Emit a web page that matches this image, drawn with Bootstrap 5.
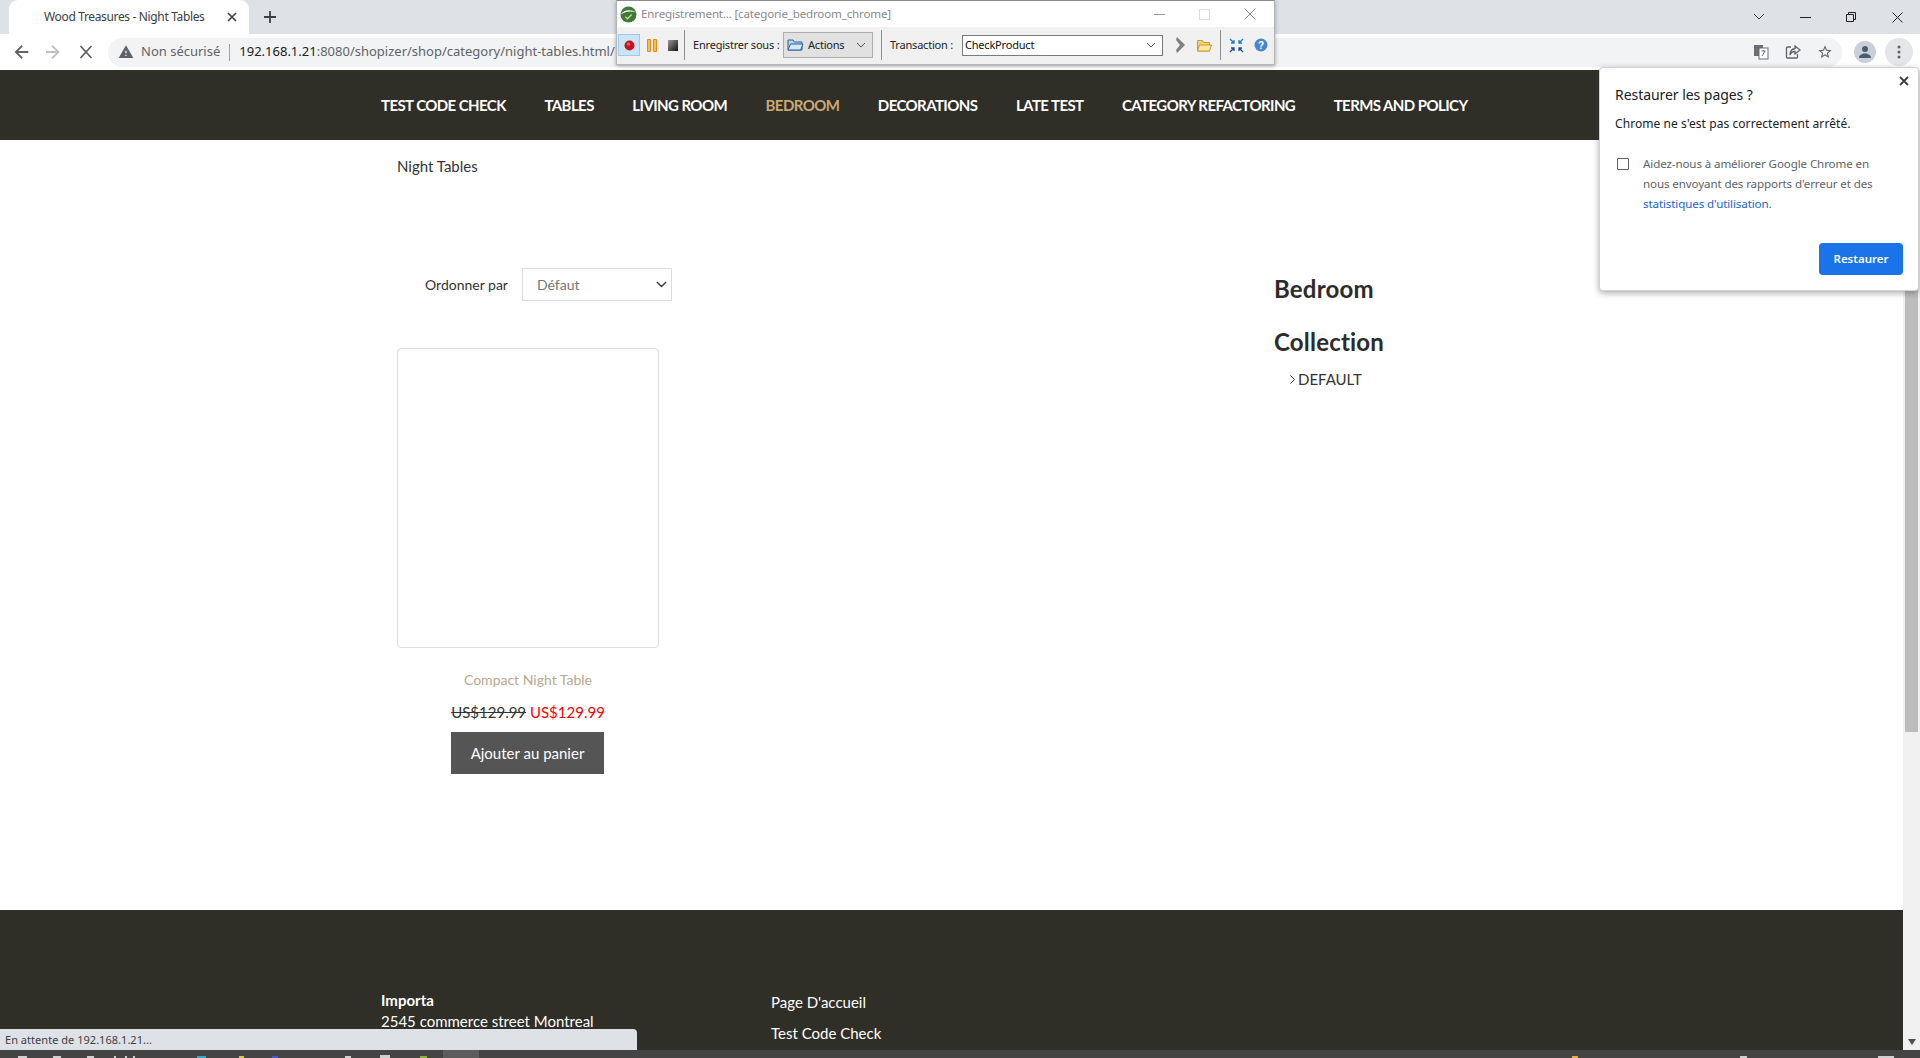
<!DOCTYPE html>
<html lang="fr">
<head>
<meta charset="utf-8">
<title>Wood Treasures - Night Tables</title>
<link href="https://cdn.jsdelivr.net/npm/bootstrap@5.3.0/dist/css/bootstrap.min.css" rel="stylesheet">
<style>
html,body{height:1058px;overflow:hidden}
body{width:1920px;font-family:"Lato","Liberation Sans",sans-serif;font-size:15px;color:#333;background:#fff;position:relative}
.ui-font{font-family:"Noto Sans","Liberation Sans",sans-serif}
.desk{height:1058px}
.tabbar{height:34px;background:#dee1e6;flex:none}
.tab-item{width:240px;height:34px;margin-left:9px;background:#fff;border-radius:9px 9px 0 0;color:#3c4043;font-size:12px;letter-spacing:-.35px}
.tab-fav{width:35px;flex:none}
.tab-title{width:182px;white-space:nowrap}
.tab-plus{margin-left:14px}
.win-ctl{gap:0}
.win-ctl span{width:46px;height:28px}
.toolbar{height:36px;background:#fff;flex:none;padding-left:10px;padding-right:7px}
.nav-ico{width:31px;height:20px;flex:none}
.omnibox{width:1735px;height:29px;margin-left:5px;border-radius:15px;background:#f1f3f4;font-size:13px;color:#5f6368;padding-left:10px;white-space:nowrap}
.omni-warn{margin-right:7px}
.omni-sep{width:1px;height:17px;background:#9aa0a6;margin:0 9px}
.omni-host{color:#202124}
.omni-right{margin-left:auto;gap:16px;padding-right:9px}
.avatar{width:22px;height:22px;border-radius:50%;background:#c9d0da;margin-left:12px}
.menu-dot{width:28px;height:28px;border-radius:50%;background:#e4e6e9;margin-left:9px}
.view{min-height:0;flex:1 1 auto}
.page-col{width:1903px;flex:none}
.site-nav{height:70px;background:#2f2e27;padding:0}
.site-wrap{width:1142px;max-width:1142px;margin-left:381px;margin-right:0;padding:0}
.site-nav .navbar-nav{gap:38.5px}
.site-nav .navbar-nav .nav-link{padding:0;color:#fff;font-weight:700;font-size:15px;letter-spacing:-.58px;white-space:nowrap}
.site-nav .navbar-nav .nav-link.active{color:#c9a876}
.main-area{height:770px;background:#fff}
.crumb-line{padding:16px 0 0 16px;height:36px;line-height:20px;font-size:15px;color:#333}
.sort-row{margin:92px 0 0 44px;height:33px;gap:14px;font-size:14px;color:#333}
.sort-select{width:150px;height:33px;border:1px solid #ddd;border-radius:0;padding:0 14px;font-family:"Lato",sans-serif;font-size:14px;color:#777;background-position:right 4px center;background-size:11px}
.prod-box{width:262px;margin:47px 0 0 16px}
.prod-img{height:300px;border-color:#ddd;border-radius:4px}
.prod-name{margin-top:22px;line-height:20px;font-size:14px;color:#b9a98f}
.prod-price{margin-top:12px;line-height:20px;font-size:15px}
.price-old{color:#333;text-decoration:line-through}
.price-new{color:#f00}
.cart-btn{margin-top:10px;margin-right:1px;width:153px;height:42px;background:#555;color:#fff;border:0;border-radius:0;font-size:15px;padding:0}
.cart-btn:hover{background:#555;color:#fff}
.side-col{flex:0 0 249px;padding-top:134px}
.side-head{font-size:24px;font-weight:700;line-height:30px;letter-spacing:.2px;color:#2b2b2b;margin:0}
.side-head+.side-head{margin-top:23px}
.side-link{margin:12px 0 0 16px;line-height:20px;font-size:15px;color:#333;gap:3px}
.site-foot{height:140px;background:#2f2e27;color:#fff;padding-top:80px;font-size:15px}
.foot-a{width:390px;line-height:21px}
.foot-b div{line-height:20px;margin-bottom:11px}
.foot-b{padding-top:2px}
.sbar{width:17px;flex:none;background:#f1f1f1}
.sbar-thumb{height:662px;width:13px;margin-left:2px;background:#bcbcbc}
.sbar-arrow{margin-top:auto;height:16px}
.taskbar{height:8px;flex:none;background:#444;display:block}
.rec-win{position:absolute;left:616px;top:0;width:659px;height:65px;background:#f0f0f0;border:1px solid #b5b5b5;border-top-color:#8d8d8d;box-shadow:0 1px 4px rgba(0,0,0,.35);font-family:"Noto Sans","Liberation Sans",sans-serif;font-size:11px;letter-spacing:-.2px;color:#222}
.rec-title{height:26px;background:#fff;color:#8a8a8a;padding-left:3px;gap:4px;font-size:11.6px;letter-spacing:-.18px}
.rec-ctl{margin-left:auto;margin-right:2px;gap:0}
.rec-ctl span{width:45px;height:26px;display:flex;align-items:center;justify-content:center}
.rec-tools{height:36px;padding-left:1px}
.rec-on{width:22px;height:22px;background:#cce4f7;border:1px solid #9fc9ea}
.rec-pause{margin-left:7px}
.rec-stop{margin-left:11px}
.rec-sep{width:1px;height:30px;background:#8f8f8f;flex:none}
.sep-a{margin-left:6px}
.rec-label-a{margin-left:8px;width:90px;white-space:nowrap}
.rec-act{width:90px;height:26px;background:#e1e1e1;border:1px solid #adadad;padding:0 6px 0 3px}
.sep-b{margin-left:8px}
.rec-label-b{margin-left:8px;width:72px;white-space:nowrap}
.rec-combo{width:201px;height:21px;background:#fff;border:1px solid #7a7a7a;padding:0 6px 0 2px;color:#111}
.rec-go{margin-left:13px}
.rec-open{margin-left:11px}
.sep-c{margin-left:8px}
.rec-shrink{margin-left:8px}
.rec-help{margin-left:10px}
.restore-pop{position:absolute;left:1599px;top:67px;width:320px;height:224px;background:#fff;border:1px solid #d0d2d5;border-radius:4px;box-shadow:0 2px 6px rgba(60,64,67,.45);padding:17px 15px 15px;font-family:"Noto Sans","Liberation Sans",sans-serif;color:#202124}
.pop-x{position:absolute;right:9px;top:8px;line-height:0}
.pop-title{font-size:14px;line-height:20px;letter-spacing:-.05px}
.pop-sub{font-size:12px;line-height:20px;margin-top:9px;letter-spacing:.07px}
.pop-check{margin-top:20px;gap:14px;font-size:11.6px;line-height:20px;color:#5f6368;letter-spacing:-.12px}
.pop-text{width:240px}
.pop-box{width:12px;height:12px;border:1.5px solid #5f6368;border-radius:1px;margin:4px 0 0 2px;flex:none}
.pop-link{color:#1a65c8}
.pop-btn{position:absolute;right:15px;bottom:15px;width:84px;height:32px;background:#1a73e8;border:0;border-radius:4px;color:#fff;font-size:11.5px;font-weight:600;padding:0;font-family:inherit}
.pop-btn:hover{background:#1a73e8;color:#fff}
.status-tip{position:absolute;left:0;top:1029px;width:637px;height:21px;background:#dee1e6;border-radius:0 4px 0 0;padding-left:5px;line-height:21px;font-family:"Noto Sans","Liberation Sans",sans-serif;font-size:11px;letter-spacing:.03px;color:#3c4043}
</style>
</head>
<body>
<div class="desk d-flex flex-column">

  <div class="tabbar d-flex align-items-end ui-font">
    <div class="tab-item d-flex align-items-center">
      <span class="tab-fav"></span>
      <span class="tab-title">Wood Treasures - Night Tables</span>
      <svg width="12" height="12" viewBox="0 0 12 12"><path d="M2 2l8 8M10 2l-8 8" stroke="#3c4043" stroke-width="1.6"/></svg>
    </div>
    <svg class="tab-plus align-self-center" width="14" height="14" viewBox="0 0 14 14"><path d="M7 1v12M1 7h12" stroke="#3c4043" stroke-width="1.8"/></svg>
    <div class="win-ctl d-flex ms-auto align-self-center">
      <span class="d-flex align-items-center justify-content-center"><svg width="12" height="8" viewBox="0 0 12 8"><path d="M1 1l5 5 5-5" fill="none" stroke="#3c4043"/></svg></span>
      <span class="d-flex align-items-center justify-content-center"><svg width="11" height="3" viewBox="0 0 11 3"><path d="M0 1.5h11" stroke="#202124" stroke-width="1"/></svg></span>
      <span class="d-flex align-items-center justify-content-center"><svg width="10" height="10" viewBox="0 0 10 10"><path d="M.5 2.5h7v7h-7zM2.500 2.500V.5h7v7H7.500" fill="none" stroke="#202124"/></svg></span>
      <span class="d-flex align-items-center justify-content-center"><svg width="11" height="11" viewBox="0 0 11 11"><path d="M.5.5l10 10M10.500.5l-10 10" stroke="#202124"/></svg></span>
    </div>
  </div>

  <div class="toolbar d-flex align-items-center ui-font">
    <svg class="nav-ico" viewBox="0 0 31 20"><path d="M18.300 9H8.200l4.600-4.600L11.600 3 4.600 10l7 7 1.200-1.400L8.200 11h10.100z" fill="#5f6368"/></svg>
    <svg class="nav-ico" viewBox="0 0 31 20"><path d="M5 9h10.100L10.500 4.400 11.700 3l7 7-7 7-1.200-1.400 4.600-4.600H5z" fill="#bdc1c6"/></svg>
    <svg class="nav-ico" viewBox="0 0 31 20"><path d="M8.500 4l11 12M19.500 4L8.500 16" stroke="#5f6368" stroke-width="1.800"/></svg>
    <div class="omnibox d-flex align-items-center">
      <svg class="omni-warn" width="16" height="16" viewBox="0 0 24 24"><path d="M1 21h22L12 2 1 21zm12-3h-2v-2h2v2zm0-4h-2v-4h2v4z" fill="#5f6368"/></svg>
      <span>Non sécurisé</span><span class="omni-sep"></span>
      <span><span class="omni-host">192.168.1.21</span>:8080/shopizer/shop/category/night-tables.html/</span>
      <div class="omni-right d-flex align-items-center">
        <svg width="16" height="16" viewBox="0 0 16 16"><rect x="1" y="1" width="9" height="11" fill="#6a6f75"/><rect x="6" y="4" width="9" height="11" fill="#fff" stroke="#6a6f75"/><path d="M8.500 7h4M10.500 6v1M9 12l3-5" stroke="#6a6f75" fill="none"/></svg>
        <svg width="16" height="16" viewBox="0 0 16 16"><path d="M6 3H2.500A1 1 0 0 0 1.500 4v9a1 1 0 0 0 1 1h9a1 1 0 0 0 1-1v-3" fill="none" stroke="#5f6368" stroke-width="1.300"/><path d="M10 2l5 4-5 4V7.500C7.500 7.500 6 8.500 5 11c0-4 2-6 5-6.500z" fill="none" stroke="#5f6368" stroke-width="1.300"/></svg>
        <svg width="16" height="16" viewBox="0 0 24 24"><path d="M22 9.240l-7.190-.62L12 2 9.190 8.630 2 9.240l5.460 4.730L5.820 21 12 17.270 18.180 21l-1.630-7.030L22 9.240zM12 15.400l-3.760 2.270 1-4.280-3.320-2.880 4.380-.38L12 6.100l1.710 4.040 4.380.38-3.320 2.880 1 4.280L12 15.400z" fill="#5f6368"/></svg>
      </div>
    </div>
    <div class="avatar d-flex align-items-center justify-content-center"><svg width="14" height="14" viewBox="0 0 14 14"><circle cx="7" cy="4" r="3" fill="#4d5b6c"/><path d="M1 13c0-3 3-4.500 6-4.500s6 1.500 6 4.500z" fill="#4d5b6c"/></svg></div>
    <div class="menu-dot d-flex align-items-center justify-content-center"><svg width="4" height="14" viewBox="0 0 4 14"><circle cx="2" cy="2" r="1.500" fill="#5f6368"/><circle cx="2" cy="7" r="1.500" fill="#5f6368"/><circle cx="2" cy="12" r="1.500" fill="#5f6368"/></svg></div>
  </div>

  <div class="view d-flex">
    <div class="page-col d-flex flex-column">
      <nav class="navbar navbar-expand site-nav">
        <div class="container site-wrap">
          <ul class="navbar-nav">
            <li class="nav-item"><a class="nav-link" href="#">TEST CODE CHECK</a></li>
            <li class="nav-item"><a class="nav-link" href="#">TABLES</a></li>
            <li class="nav-item"><a class="nav-link" href="#">LIVING ROOM</a></li>
            <li class="nav-item"><a class="nav-link active" href="#">BEDROOM</a></li>
            <li class="nav-item"><a class="nav-link" href="#">DECORATIONS</a></li>
            <li class="nav-item"><a class="nav-link" href="#">LATE TEST</a></li>
            <li class="nav-item"><a class="nav-link" href="#">CATEGORY REFACTORING</a></li>
            <li class="nav-item"><a class="nav-link" href="#">TERMS AND POLICY</a></li>
          </ul>
        </div>
      </nav>

      <main class="main-area">
        <div class="container site-wrap">
          <div class="row g-0">
            <div class="col">
              <div class="crumb-line">Night Tables</div>
              <div class="sort-row d-flex align-items-center">
                <label for="sortby">Ordonner par</label>
                <select id="sortby" class="form-select sort-select"><option>Défaut</option></select>
              </div>
              <div class="prod-box text-center">
                <div class="card prod-img"></div>
                <div class="prod-name">Compact Night Table</div>
                <div class="prod-price"><span class="price-old">US$129.99</span> <span class="price-new">US$129.99</span></div>
                <button type="button" class="btn cart-btn">Ajouter au panier</button>
              </div>
            </div>
            <aside class="side-col">
              <h2 class="side-head">Bedroom</h2>
              <h2 class="side-head">Collection</h2>
              <div class="side-link d-flex align-items-center">
                <svg width="5" height="9" viewBox="0 0 5 9"><path d="M.5.5l4 4-4 4" fill="none" stroke="#333"/></svg>
                <span>DEFAULT</span>
              </div>
            </aside>
          </div>
        </div>
      </main>

      <footer class="site-foot">
        <div class="container site-wrap d-flex">
          <div class="foot-a"><strong>Importa</strong><br>2545 commerce street Montreal</div>
          <div class="foot-b"><div>Page D'accueil</div><div>Test Code Check</div></div>
        </div>
      </footer>
    </div>
    <div class="sbar d-flex flex-column">
      <div class="sbar-thumb"></div>
      <div class="sbar-arrow d-flex align-items-center justify-content-center"><svg width="8" height="6" viewBox="0 0 8 6"><path d="M0 0h8L4 6z" fill="#505050"/></svg></div>
    </div>
  </div>

  <svg class="taskbar" viewBox="0 0 1920 8" width="1920" height="8">
    <rect x="443" y="0" width="36" height="8" fill="#5c5c5c"/>
    <g fill="#cfcfcf"><rect x="18" y="6" width="9" height="2"/><rect x="53" y="6" width="8" height="2"/><rect x="87" y="6" width="7" height="2"/><rect x="114" y="6" width="2" height="2"/><rect x="125" y="6" width="2" height="2"/><rect x="133" y="6" width="2" height="2"/><rect x="345" y="6" width="6" height="2"/><rect x="380" y="5" width="10" height="3"/><rect x="1740" y="6" width="7" height="2"/><rect x="1878" y="6" width="16" height="2"/></g>
    <rect x="197" y="6" width="9" height="2" fill="#3aa6c4"/><rect x="239" y="6" width="5" height="2" fill="#d9c34a"/><rect x="272" y="6" width="6" height="2" fill="#4a55c8"/><rect x="420" y="6" width="7" height="2" fill="#8ab03c"/><rect x="1572" y="6" width="6" height="2" fill="#e0b040"/>
  </svg>
</div>

<div class="rec-win">
  <div class="rec-title d-flex align-items-center">
    <svg width="17" height="17" viewBox="0 0 16 16"><circle cx="8" cy="8" r="7.500" fill="#3f7a35"/><path d="M.8 8C3 3.500 10 2.500 15.200 6c-5-1.500-10-1-14.400 2z" fill="#fff"/><path d="M5 10l2 2 4-4" fill="none" stroke="#c5de8a" stroke-width="1.200"/></svg>
    <span>Enregistrement... [categorie_bedroom_chrome]</span>
    <div class="rec-ctl d-flex">
      <span><svg width="11" height="3" viewBox="0 0 11 3"><path d="M0 1.500h11" stroke="#999"/></svg></span>
      <span><svg width="11" height="11" viewBox="0 0 11 11"><rect x=".5" y=".5" width="10" height="10" fill="none" stroke="#ddd"/></svg></span>
      <span><svg width="12" height="12" viewBox="0 0 12 12"><path d="M.5.500l11 11M11.500.500l-11 11" stroke="#888"/></svg></span>
    </div>
  </div>
  <div class="rec-tools d-flex align-items-center">
    <div class="rec-on d-flex align-items-center justify-content-center"><svg width="11" height="11" viewBox="0 0 11 11"><circle cx="5.500" cy="5.500" r="5" fill="#c4161c"/><circle cx="4.500" cy="4" r="1.500" fill="#ea6a6a"/></svg></div>
    <svg class="rec-pause" width="10" height="13" viewBox="0 0 10 13"><path d="M.5.500h3v12h-3zM6.500.500h3v12h-3z" fill="#f5c04a" stroke="#e08a20"/></svg>
    <svg class="rec-stop" width="10" height="11" viewBox="0 0 10 11"><defs><linearGradient id="st" x1="0" y1="0" x2="1" y2="1"><stop offset="0" stop-color="#999"/><stop offset="1" stop-color="#111"/></linearGradient></defs><rect width="10" height="11" fill="url(#st)"/></svg>
    <span class="rec-sep sep-a"></span>
    <span class="rec-label-a">Enregistrer sous :</span>
    <div class="rec-act d-flex align-items-center gap-1">
      <svg width="17" height="14" viewBox="0 0 17 14"><path d="M1 12V2h5l1.500 2H15v8z" fill="#bcd4ee" stroke="#2f5f9e"/><path d="M1 12l2.500-6H16l-2.500 6z" fill="#d8e8f8" stroke="#2f5f9e"/></svg>
      <span>Actions</span>
      <svg class="ms-auto" width="10" height="6" viewBox="0 0 10 6"><path d="M1 1l4 4 4-4" fill="none" stroke="#555"/></svg>
    </div>
    <span class="rec-sep sep-b"></span>
    <span class="rec-label-b">Transaction :</span>
    <div class="rec-combo d-flex align-items-center">
      <span>CheckProduct</span>
      <svg class="ms-auto" width="10" height="6" viewBox="0 0 10 6"><path d="M1 1l4 4 4-4" fill="none" stroke="#555"/></svg>
    </div>
    <svg class="rec-go" width="10" height="16" viewBox="0 0 10 16"><path d="M1 0l8 8-8 8-1-3 4-5-4-5z" fill="#7f7f7f"/></svg>
    <svg class="rec-open" width="15" height="13" viewBox="0 0 15 13"><path d="M.5 12V1.500h5l1 2h6V12z" fill="#f3d27a" stroke="#c79a32"/><path d="M.5 12l2-6h12l-2 6z" fill="#fbe7a8" stroke="#c79a32"/></svg>
    <span class="rec-sep sep-c"></span>
    <svg class="rec-shrink" width="15" height="15" viewBox="0 0 15 15"><path d="M1 1l4 4M5 2v3H2M14 1l-4 4M10 2v3h3" fill="none" stroke="#1a7fb8" stroke-width="1.300"/><path d="M1 14l4-4M5 13v-3H2M14 14l-4-4M10 13v-3h3" fill="none" stroke="#1a4f9e" stroke-width="1.300"/></svg>
    <svg class="rec-help" width="14" height="14" viewBox="0 0 14 14"><circle cx="7" cy="7" r="6.500" fill="#4a86d0"/><text x="7" y="10.500" text-anchor="middle" font-size="10" font-weight="700" font-family="Liberation Sans" fill="#fff">?</text></svg>
  </div>
</div>

<div class="restore-pop">
  <div class="pop-x"><svg width="10" height="10" viewBox="0 0 10 10"><path d="M1 1l8 8M9 1L1 9" stroke="#3c4043" stroke-width="1.800"/></svg></div>
  <div class="pop-title">Restaurer les pages ?</div>
  <div class="pop-sub">Chrome ne s'est pas correctement arrêté.</div>
  <div class="pop-check d-flex">
    <span class="pop-box"></span>
    <div class="pop-text">Aidez-nous à améliorer Google Chrome en nous envoyant des rapports d'erreur et des <a class="pop-link text-decoration-none" href="#">statistiques d'utilisation.</a></div>
  </div>
  <button type="button" class="btn pop-btn">Restaurer</button>
</div>

<div class="status-tip">En attente de 192.168.1.21...</div>
</body>
</html>
